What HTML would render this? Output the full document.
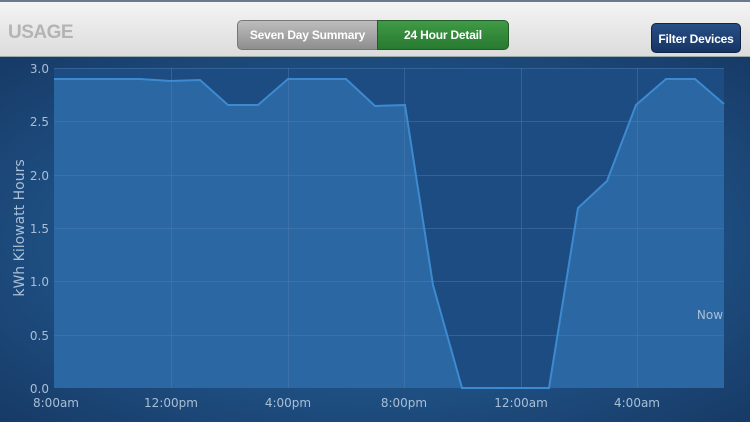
<!DOCTYPE html>
<html><head><style>
body{margin:0;width:750px;height:422px;overflow:hidden;font-family:"Liberation Sans",sans-serif;background:#1a3d68}
.hdr{position:absolute;left:0;top:0;width:750px;height:57px;background:linear-gradient(#f4f4f4,#dcdcdc);border-top:2px solid #6a7a8e;box-sizing:border-box;border-bottom:1px solid #9aa}
.usage{position:absolute;left:8px;top:20px;font-size:19px;font-weight:bold;color:#b4b4b4;letter-spacing:-0.5px}
.seg{position:absolute;top:18px;height:30px;box-sizing:border-box;font-size:12px;font-weight:bold;color:#fff;text-align:center;line-height:28px;letter-spacing:-0.2px}
.s1{left:237px;width:141px;background:linear-gradient(#bdbdbd,#8e8e8e);border:1px solid #777;border-radius:5px 0 0 5px}
.s2{left:377px;width:132px;background:linear-gradient(#3f9a46,#287a30);border:1px solid #235c28;border-radius:0 5px 5px 0}
.fd{position:absolute;left:651px;top:21px;width:90px;height:30px;background:linear-gradient(#274e85,#163563);border-radius:5px;color:#fff;font-size:12px;font-weight:bold;text-align:center;line-height:30px;border:1px solid #0f2547;box-sizing:border-box;letter-spacing:-0.2px}
.chart{position:absolute;left:0;top:57px;width:750px;height:365px;background:radial-gradient(ellipse at center,#1f5185 55%,#173a66 100%)}
</style></head><body>
<div class="chart"></div>
<svg style="position:absolute;left:0;top:0" width="750" height="422">
<rect x="54" y="68" width="670" height="320" fill="#1c4c82"/>
<polygon points="54,388 54,79 140,79 170,81 200,80 228,105 258,105 288,79 346,79 375,106 405,105 433,285 462,388 549,388 578,208 607,181 636,105 666,79 695,79 724,104 724,388" fill="#2a67a3"/>
<g stroke="#4f7fb0" stroke-opacity="0.45" stroke-width="1">
<line x1="54" x2="724" y1="68.5" y2="68.5"/><line x1="54" x2="724" y1="121.5" y2="121.5"/><line x1="54" x2="724" y1="175.5" y2="175.5"/><line x1="54" x2="724" y1="228.5" y2="228.5"/><line x1="54" x2="724" y1="281.5" y2="281.5"/><line x1="54" x2="724" y1="335.5" y2="335.5"/>
<line y1="68" y2="388" x1="171.5" x2="171.5"/><line y1="68" y2="388" x1="288.5" x2="288.5"/><line y1="68" y2="388" x1="404.5" x2="404.5"/><line y1="68" y2="388" x1="521.5" x2="521.5"/><line y1="68" y2="388" x1="637.5" x2="637.5"/>
</g>
<polyline points="54,79 140,79 170,81 200,80 228,105 258,105 288,79 346,79 375,106 405,105 433,285 462,388 549,388 578,208 607,181 636,105 666,79 695,79 724,104" fill="none" stroke="#3d8ad0" stroke-width="2"/>
<g fill="#a9bfd6" font-family="DejaVu Sans,sans-serif" font-size="12" text-anchor="end">
<text x="49" y="73">3.0</text><text x="49" y="126">2.5</text><text x="49" y="180">2.0</text><text x="49" y="233">1.5</text><text x="49" y="286">1.0</text><text x="49" y="340">0.5</text><text x="49" y="393">0.0</text>
</g>
<g fill="#a9bfd6" font-family="DejaVu Sans,sans-serif" font-size="12" text-anchor="middle">
<text x="56" y="407">8:00am</text><text x="171" y="407">12:00pm</text><text x="288" y="407">4:00pm</text><text x="404" y="407">8:00pm</text><text x="521" y="407">12:00am</text><text x="637" y="407">4:00am</text>
<text x="710" y="319">Now</text>
<text transform="translate(24,228) rotate(-90)" font-size="14">kWh Kilowatt Hours</text>
</g>
</svg>
<div class="hdr"><div class="usage">USAGE</div>
<div class="seg s1">Seven Day Summary</div><div class="seg s2">24 Hour Detail</div>
<div class="fd">Filter Devices</div></div>
</body></html>
